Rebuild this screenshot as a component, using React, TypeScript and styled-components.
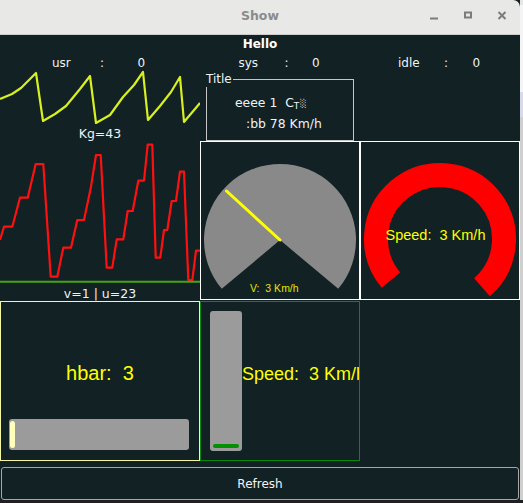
import React from 'react';
import styled, { createGlobalStyle } from 'styled-components';

const Global = createGlobalStyle`
  html, body { margin: 0; padding: 0; background: #202020; }
  body { width: 523px; height: 503px; overflow: hidden; font-family: "DejaVu Sans", sans-serif; }
  #root { width: 523px; height: 503px; }
`;

const Screen = styled.div`
  display: flex;
  width: 523px;
  height: 503px;
  align-items: flex-start;
`;

const Sliver = styled.div`
  width: 3px;
  height: 500px;
  background: linear-gradient(#e6e6e6 0 5px, #f4f4f4 5px 92px, #d9d9ec 92px 117px, #cfcfcf 117px);
`;

const Window = styled.div`
  width: 520px;
  height: 500px;
  display: flex;
  flex-direction: column;
  background: #122123;
`;

const TitleBar = styled.div`
  flex: none;
  height: 34px;
  background: #e8e8e7;
  border-bottom: 1px solid #cdcdcb;
  border-top-right-radius: 7px;
  display: grid;
  grid-template-columns: 1fr auto 1fr;
  align-items: center;
  padding-bottom: 2px;
  box-sizing: content-box;
  height: 32px;
`;

const TitleText = styled.div`
  grid-column: 2;
  font-weight: bold;
  font-size: 12.5px;
  color: #8b8b8b;
  margin-top: -2px;
`;

const Controls = styled.div`
  grid-column: 3;
  justify-self: end;
  display: flex;
  padding-right: 1px;
`;

const CtrlButton = styled.div`
  width: 34px;
  height: 32px;
  display: flex;
  align-items: center;
  justify-content: center;
`;

const Content = styled.div`
  flex: 1;
  display: flex;
  flex-direction: column;
  color: #eef3f6;
  font-size: 12px;
`;

const Heading = styled.div`
  height: 18px;
  line-height: 18px;
  text-align: center;
  font-weight: bold;
  font-size: 12px;
  color: #ffffff;
`;

const Stats = styled.div`
  height: 17px;
  box-sizing: border-box;
  padding: 3px 0 0 52px;
  line-height: 14px;
  display: grid;
  grid-template-columns: 48px 37.5px 101px 46px 27.5px 86px 46px 28.5px auto;
  white-space: nowrap;
`;

const Board = styled.div`
  display: grid;
  grid-template-columns: 200px 160px 160px;
  grid-template-rows: 71px 160px 160px;
`;

const ChartColumn = styled.div`
  grid-column: 1;
  grid-row: 1 / span 2;
  display: flex;
  flex-direction: column;
`;

const ChartSvg = styled.svg`
  display: block;
  flex: none;
`;

const ChartLabel = styled.div<{ $h: number }>`
  height: ${p => p.$h}px;
  line-height: ${p => p.$h}px;
  text-align: center;
  font-size: 12.5px;
  white-space: pre;
`;

const GroupBox = styled.div`
  position: relative;
  margin: 9px 0 0 6px;
  width: 148px;
  height: 62px;
  box-sizing: border-box;
  border: 1px solid #c6c6c6;
  padding-top: 15px;
  display: flex;
  flex-direction: column;
  gap: 5px;
`;

const Legend = styled.div`
  position: absolute;
  left: -1px;
  top: -8px;
  line-height: 14px;
  padding: 0 1px 1px 0;
  background: #122123;
  font-size: 12px;
`;

const GroupLine = styled.div<{ $indent: number }>`
  height: 16px;
  line-height: 16px;
  padding-left: ${p => p.$indent}px;
  white-space: pre;
  font-size: 12.4px;
`;

const Sub = styled.span`
  font-size: 9px;
  vertical-align: -2px;
`;

const Shade = styled.span`
  font-size: 8px;
  vertical-align: 1px;
  margin-left: 1px;
`;

const GaugeFrame = styled.div`
  width: 160px;
  height: 159px;
  box-sizing: border-box;
  border: 1px solid #ffffff;
  overflow: hidden;
`;

const BarFrame = styled.div<{ $color: string; $w: number }>`
  width: ${p => p.$w}px;
  height: 160px;
  box-sizing: border-box;
  border: 1px solid ${p => p.$color};
  overflow: hidden;
  font-family: "Liberation Sans", Arial, sans-serif;
  color: #ffff00;
`;

const HBarFrame = styled(BarFrame)`
  display: flex;
  flex-direction: column;
  align-items: center;
`;

const VBarFrame = styled(BarFrame)`
  display: flex;
  align-items: flex-start;
`;

const HBarLabel = styled.div`
  margin-top: 59px;
  height: 24px;
  line-height: 24px;
  font-size: 20px;
  white-space: pre;
`;

const HTrack = styled.div`
  margin: 34px 0 0 -2px;
  width: 180px;
  height: 31px;
  box-sizing: border-box;
  padding: 2px 1px;
  border-radius: 3px;
  background: #9b9b9b;
  display: flex;
`;

const HThumb = styled.div`
  width: 5px;
  border-radius: 3px;
  background: #ffffbe;
`;

const VTrack = styled.div`
  flex: none;
  margin: 9px 0 0 9px;
  width: 32px;
  height: 140px;
  box-sizing: border-box;
  padding: 0 3px 3.5px 3px;
  border-radius: 3px;
  background: #9b9b9b;
  display: flex;
  flex-direction: column;
  justify-content: flex-end;
`;

const VFill = styled.div`
  height: 3.5px;
  border-radius: 2px;
  background: #009000;
`;

const VBarLabel = styled.div`
  margin-top: 61px;
  height: 22px;
  line-height: 22px;
  font-size: 18px;
  white-space: pre;
`;

const RefreshButton = styled.button`
  margin: 6px 1px 0 1px;
  height: 33px;
  box-sizing: border-box;
  border: 1px solid #a6a6a6;
  border-radius: 3px;
  background: transparent;
  color: #f2f4f6;
  font-family: "DejaVu Sans", sans-serif;
  font-size: 12px;
  padding: 0;
`;

const yellowPts = [
  [0, 99], [12, 94], [21, 88], [36, 73], [43, 121], [55, 114], [66, 106], [80, 89], [90, 76],
  [96, 123], [110, 115], [123, 97], [134, 85], [143, 72], [148, 120], [160, 106], [171, 92],
  [180, 77], [184, 122], [200, 103],
];

const redPts = [
  [0, 240], [4, 226.7], [12.3, 226.7], [20, 197.7], [27.7, 197.7], [35.7, 164], [43.3, 164],
  [50.7, 276.7], [57.3, 276.7], [63.3, 247.7], [71, 247.7], [77.3, 220], [84, 220], [90.7, 188.3],
  [96, 155], [100.7, 155], [106.7, 267.7], [112.3, 267.7], [116.7, 239.3], [123.3, 239.3],
  [127.7, 211], [132.7, 211], [138.3, 180.7], [144, 180.7], [147.7, 144.7], [152.3, 144.7],
  [155.7, 257.7], [160.3, 257.7], [164, 230], [167.3, 230], [171.7, 201], [176, 201], [180, 171.7],
  [184, 171.7], [188.3, 280], [192.3, 280], [196, 250.7], [200, 250.7],
];

const pts = (a: number[][]) => a.map(p => p.join(',')).join(' ');

const polar = (cx: number, cy: number, r: number, deg: number) => {
  const t = (deg * Math.PI) / 180;
  return [cx + r * Math.cos(t), cy - r * Math.sin(t)];
};

function PieGauge() {
  const [sx, sy] = polar(280, 240, 76, 220);
  const [ex, ey] = polar(280, 240, 76, -40);
  return (
    <svg width="158" height="157" viewBox="201 142 158 157" style={{ display: 'block' }}>
      <path d={`M280 240 L${sx} ${sy} A76 76 0 1 1 ${ex} ${ey} Z`} fill="#898989" />
      <line x1="280" y1="240" x2="226.5" y2="191" stroke="#ffff00" strokeWidth="3" strokeLinecap="round" />
      <text x="250" y="291.5" fill="#e4e400" fontSize="10.5" fontFamily="Liberation Sans, Arial, sans-serif" style={{ whiteSpace: 'pre' }}>
        {'V:  3 Km/h'}
      </text>
    </svg>
  );
}

function ArcGauge() {
  const [sx, sy] = polar(440, 239, 64, 220);
  const [ex, ey] = polar(440, 239, 64, -49);
  return (
    <svg width="158" height="157" viewBox="361 142 158 157" style={{ display: 'block' }}>
      <path d={`M${sx} ${sy} A64 64 0 1 1 ${ex} ${ey}`} fill="none" stroke="#ff0000" strokeWidth="24" />
      <text x="385.5" y="240" fill="#ffff00" fontSize="14.5" fontFamily="Liberation Sans, Arial, sans-serif" style={{ whiteSpace: 'pre' }}>
        {'Speed:  3 Km/h'}
      </text>
    </svg>
  );
}

export default function App() {
  return (
    <>
      <Global />
      <Screen>
        <Window>
          <TitleBar>
            <TitleText>Show</TitleText>
            <Controls>
              <CtrlButton>
                <svg width="10" height="10" viewBox="0 0 10 10">
                  <rect x="1" y="6.5" width="8" height="2" fill="#7c7c7c" />
                </svg>
              </CtrlButton>
              <CtrlButton>
                <svg width="10" height="10" viewBox="0 0 10 10">
                  <rect x="2" y="1.5" width="6" height="5" fill="none" stroke="#7c7c7c" strokeWidth="2" />
                </svg>
              </CtrlButton>
              <CtrlButton>
                <svg width="10" height="10" viewBox="0 0 10 10">
                  <path d="M1.5 1 L8.5 8 M8.5 1 L1.5 8" stroke="#7c7c7c" strokeWidth="2" />
                </svg>
              </CtrlButton>
            </Controls>
          </TitleBar>
          <Content>
            <Heading>Hello</Heading>
            <Stats>
              <span>usr</span><span>:</span><span>0</span>
              <span>sys</span><span>:</span><span>0</span>
              <span>idle</span><span>:</span><span>0</span>
            </Stats>
            <Board>
              <ChartColumn>
                <ChartSvg width="200" height="56" viewBox="0 70 200 56">
                  <polyline points={pts(yellowPts)} fill="none" stroke="#d8f020" strokeWidth="2.2" strokeLinejoin="round" />
                </ChartSvg>
                <ChartLabel $h={16}>Kg=43</ChartLabel>
                <ChartSvg width="200" height="144" viewBox="0 142 200 144">
                  <polyline points={pts(redPts)} fill="none" stroke="#ff1010" strokeWidth="2.2" strokeLinejoin="round" />
                  <line x1="0" y1="281.7" x2="200" y2="281.7" stroke="#44a414" strokeWidth="2" />
                </ChartSvg>
                <ChartLabel $h={15}>{'v=1 | u=23'}</ChartLabel>
              </ChartColumn>
              <div>
                <GroupBox>
                  <Legend>Title</Legend>
                  <GroupLine $indent={28}>
                    {'eeee 1  C'}<Sub>T</Sub><Shade>░</Shade>
                  </GroupLine>
                  <GroupLine $indent={39}>{':bb 78 Km/h'}</GroupLine>
                </GroupBox>
              </div>
              <div />
              <GaugeFrame>
                <PieGauge />
              </GaugeFrame>
              <GaugeFrame>
                <ArcGauge />
              </GaugeFrame>
              <HBarFrame $color="#f6f6a2" $w={200}>
                <HBarLabel>{'hbar:  3'}</HBarLabel>
                <HTrack>
                  <HThumb />
                </HTrack>
              </HBarFrame>
              <VBarFrame $color="#0a8a0a" $w={160}>
                <VTrack>
                  <VFill />
                </VTrack>
                <VBarLabel>{'Speed:  3 Km/h'}</VBarLabel>
              </VBarFrame>
              <div />
            </Board>
            <RefreshButton>Refresh</RefreshButton>
          </Content>
        </Window>
        <Sliver />
      </Screen>
    </>
  );
}
